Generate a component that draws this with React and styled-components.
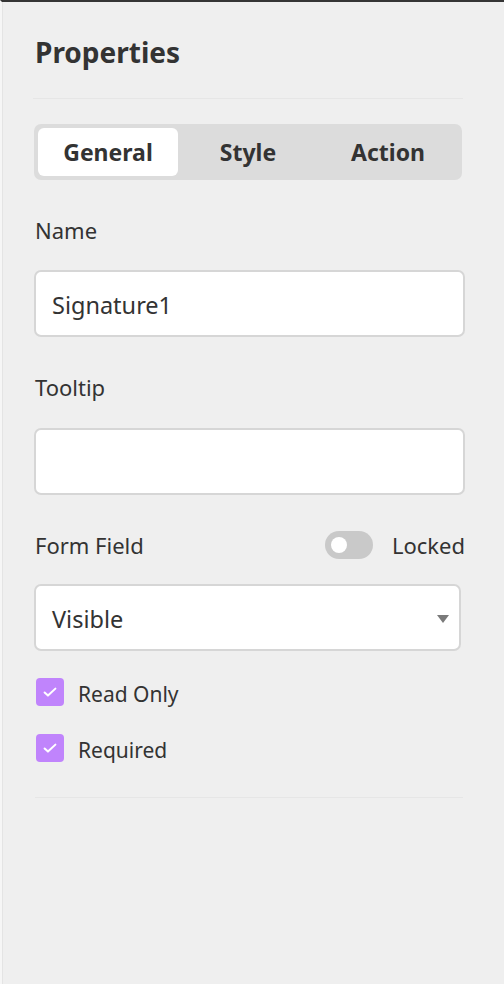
import React from "react";
import styled, { createGlobalStyle } from "styled-components";

const Global = createGlobalStyle`
  html, body { margin: 0; padding: 0; background: #efefef; }
  body { font-family: "Noto Sans", "Open Sans", sans-serif; color: #333; }
  * { box-sizing: border-box; }
`;

const Panel = styled.div`
  width: 504px;
  height: 984px;
  background: #efefef;
  border-top: 2px solid #353535;
  border-left: 2px solid #f6f6f6;
  box-shadow: inset 1px 0 0 #e4e4e4;
  padding: 0 41px 0 31px;
  display: flex;
  flex-direction: column;
`;

const Title = styled.h1`
  margin: 0;
  padding: 31px 0 0 2px;
  height: 97px;
  font-size: 28px;
  font-weight: 700;
  line-height: 38px;
  color: #333;
  border-bottom: 1px solid #e6e6e6;
`;

const Tabs = styled.div`
  margin-top: 25px;
  margin-left: 1px;
  width: 428px;
  display: grid;
  grid-template-columns: repeat(3, 1fr);
  padding: 4px;
  height: 56px;
  background: #dcdcdc;
  border-radius: 7px;
`;

const Tab = styled.button`
  border: none;
  border-radius: 6px;
  background: ${(p) => (p.$active ? "#fff" : "transparent")};
  font-family: inherit;
  font-size: 23px;
  font-weight: 700;
  color: #333;
  padding: 0;
  cursor: pointer;
`;

const Label = styled.div`
  font-size: 22px;
  line-height: 28px;
  color: #333;
  padding-left: 2px;
  margin-top: ${(p) => p.$mt || 0}px;
`;

const Input = styled.div`
  margin-top: ${(p) => p.$mt || 0}px;
  margin-left: 1px;
  width: ${(p) => p.$w || 431}px;
  height: 67px;
  background: #fff;
  border: 2px solid #d6d6d6;
  border-radius: 7px;
  display: flex;
  align-items: center;
  padding: 3px 16px 0;
  font-size: 23.5px;
  color: #333;
  position: relative;
`;

const Row = styled.div`
  margin-top: 36px;
  width: 432px;
  display: flex;
  align-items: center;
  height: 28px;
  padding-left: 2px;
`;

const RowLabel = styled.span`
  font-size: 22px;
  flex: ${(p) => (p.$grow ? 1 : "none")};
`;

const Toggle = styled.span`
  width: 48px;
  height: 28px;
  border-radius: 14px;
  background: #c9c9c9;
  display: flex;
  align-items: center;
  padding-left: 6px;
  margin-right: 19px;
  &::after {
    content: "";
    width: 16px;
    height: 16px;
    border-radius: 50%;
    background: #fff;
  }
`;

const Caret = styled.span`
  position: absolute;
  right: 10px;
  top: 29px;
  width: 0;
  height: 0;
  border-left: 6px solid transparent;
  border-right: 6px solid transparent;
  border-top: 8px solid #7a7a7a;
`;

const Check = styled.label`
  display: flex;
  align-items: center;
  gap: 14px;
  height: 28px;
  margin-top: ${(p) => p.$mt}px;
  margin-left: 3px;
  font-size: 21px;
  color: #333;
`;

const CheckText = styled.span`
  padding-top: 3px;
`;

const Box = styled.span`
  width: 28px;
  height: 28px;
  border-radius: 4px;
  background: #c084fc;
  display: flex;
  align-items: center;
  justify-content: center;
`;

const Divider = styled.div`
  margin-top: 35px;
  margin-left: 2px;
  height: 1px;
  background: #e6e6e6;
`;

function CheckItem({ mt, children }) {
  return (
    <Check $mt={mt}>
      <Box>
        <svg width="18" height="18" viewBox="0 0 16 16" fill="none">
          <path d="M3.2 8.4l3 2.8L12.8 5" stroke="#fff" strokeWidth="1.8" strokeLinecap="round" strokeLinejoin="round" />
        </svg>
      </Box>
      <CheckText>{children}</CheckText>
    </Check>
  );
}

export default function App() {
  return (
    <>
      <Global />
      <Panel>
        <Title>Properties</Title>
        <Tabs>
          <Tab $active>General</Tab>
          <Tab>Style</Tab>
          <Tab>Action</Tab>
        </Tabs>
        <Label $mt={36}>Name</Label>
        <Input $mt={26}>Signature1</Input>
        <Label $mt={36}>Tooltip</Label>
        <Input $mt={27}></Input>
        <Row>
          <RowLabel $grow>Form Field</RowLabel>
          <Toggle />
          <RowLabel>Locked</RowLabel>
        </Row>
        <Input $mt={25} $w={427}>
          Visible
          <Caret />
        </Input>
        <CheckItem mt={27}>Read Only</CheckItem>
        <CheckItem mt={28}>Required</CheckItem>
        <Divider />
      </Panel>
    </>
  );
}
